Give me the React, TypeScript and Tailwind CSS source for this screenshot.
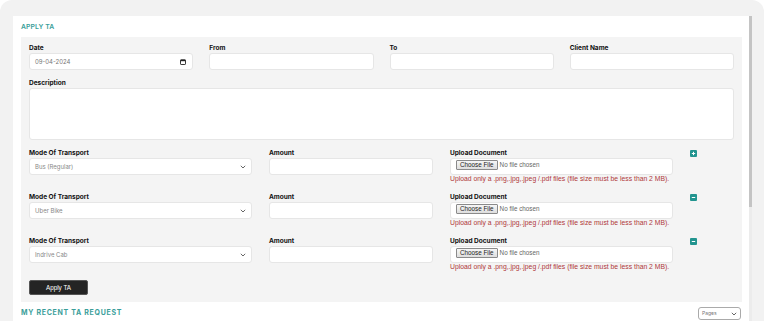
import React from "react";

const sans = "font-['Inter','Open_Sans',sans-serif]";
const arial = "font-['Liberation_Sans',Arial,sans-serif]";

const transports = [
  { mode: "Bus (Regular)", icon: "plus" },
  { mode: "Uber Bike", icon: "minus" },
  { mode: "Indrive Cab", icon: "minus" },
];

const Label = ({ children }: { children: React.ReactNode }) => (
  <div className={`${sans} text-[6.5px] font-bold text-[#111] leading-[8px] mb-[1px]`}>{children}</div>
);

const Box = ({ children, className = "" }: { children?: React.ReactNode; className?: string }) => (
  <div
    className={`h-[17px] bg-white border border-[#e6e6e6] rounded-[3px] flex items-center px-[5px] ${className}`}
  >
    {children}
  </div>
);

const Chevron = () => (
  <svg width="6" height="4" viewBox="0 0 6 4" className="ml-auto">
    <path d="M0.8 0.8 L3 3 L5.2 0.8" fill="none" stroke="#555" strokeWidth="0.9" />
  </svg>
);

const SquareIcon = ({ type }: { type: string }) => (
  <div className="w-[7px] h-[7px] bg-[#22948f] rounded-[1px] flex items-center justify-center">
    <svg width="5" height="5" viewBox="0 0 5 5">
      <path d="M0.8 2.5 H4.2" stroke="#fff" strokeWidth="1" />
      {type === "plus" && <path d="M2.5 0.8 V4.2" stroke="#fff" strokeWidth="1" />}
    </svg>
  </div>
);

export default function App() {
  return (
    <div className="w-[764px] h-[321px] bg-white overflow-hidden">
      <div className="h-full bg-[#f2f2f2] rounded-t-[12px] pt-[16px] pl-[13px] pr-[12px] flex">
        <div className="flex-1 bg-white pl-[8px] pr-[7px] flex flex-col">
          <div className={`${sans} shrink-0 h-[21px] pt-[2px] flex items-center text-[6.8px] font-semibold text-[#3a9e9a] tracking-[0.1px]`}>
            APPLY TA
          </div>
          <div className="shrink-0 bg-[#f4f4f4] px-[8px] pt-[7px] pb-[7px]">
            <div className="grid grid-cols-4 gap-x-4">
              <div>
                <Label>Date</Label>
                <Box>
                  <span className={`${sans} text-[6px] text-[#777]`}>09-04-2024</span>
                  <svg width="6" height="6" viewBox="0 0 6 6" className="ml-auto mr-[1px]">
                    <rect x="0.5" y="0.8" width="5" height="4.7" rx="0.6" fill="none" stroke="#222" strokeWidth="0.9" />
                    <rect x="0.5" y="0.8" width="5" height="1.4" fill="#222" />
                  </svg>
                </Box>
              </div>
              <div>
                <Label>From</Label>
                <Box />
              </div>
              <div>
                <Label>To</Label>
                <Box />
              </div>
              <div>
                <Label>Client Name</Label>
                <Box />
              </div>
            </div>

            <div className="mt-[9px]">
              <Label>Description</Label>
              <div className="h-[52px] bg-white border border-[#e6e6e6] rounded-[3px]" />
            </div>

            <div className="mt-[9px] flex flex-col gap-[10px]">
              {transports.map((t, i) => (
                <div key={i} className="grid grid-cols-[223px_164px_223px_1fr] gap-x-[17px]">
                  <div>
                    <Label>Mode Of Transport</Label>
                    <Box>
                      <span className={`${sans} text-[6px] text-[#888]`}>{t.mode}</span>
                      <Chevron />
                    </Box>
                  </div>
                  <div>
                    <Label>Amount</Label>
                    <Box />
                  </div>
                  <div>
                    <Label>Upload Document</Label>
                    <Box className="px-[1px] items-start pt-[1px]">
                      <span
                        className={`${arial} text-[6.3px] leading-[8px] text-[#222] px-[3px] border border-[#8a8a8a] rounded-[1px] bg-gradient-to-b from-[#f6f6f6] to-[#dedede]`}
                      >
                        Choose File
                      </span>
                      <span className={`${arial} text-[6.3px] leading-[10px] text-[#666] ml-[2px]`}>No file chosen</span>
                    </Box>
                    <div className={`${arial} text-[6.8px] text-[#b0383a] mt-[0px] leading-[8px] whitespace-nowrap`}>
                      Upload only a .png,.jpg,.jpeg /.pdf files (file size must be less than 2 MB).
                    </div>
                  </div>
                  <div className="pt-[1px]">
                    <SquareIcon type={t.icon} />
                  </div>
                </div>
              ))}
            </div>

            <button
              className={`${arial} mt-[9px] w-[59px] h-[15px] bg-[#242424] border border-[#555] rounded-[2px] text-white text-[6.3px] flex items-center justify-center`}
            >
              Apply TA
            </button>
          </div>
          <div className="shrink-0 flex items-center justify-between h-[20px] pt-[3px]">
            <div className={`${sans} text-[7px] font-bold text-[#3a9e9a] tracking-[0.7px]`}>MY RECENT TA REQUEST</div>
            <div className="w-[43px] h-[13px] border border-[#aaa] rounded-[3px] bg-white flex items-center px-[3px] mr-[1px]">
              <span className={`${sans} text-[5px] text-[#777]`}>Pages</span>
              <Chevron />
            </div>
          </div>
        </div>
        <div className="w-[3px] flex flex-col bg-[#ececec]">
          <div className="h-[191px] bg-[#c4c4c4]" />
        </div>
      </div>
    </div>
  );
}
